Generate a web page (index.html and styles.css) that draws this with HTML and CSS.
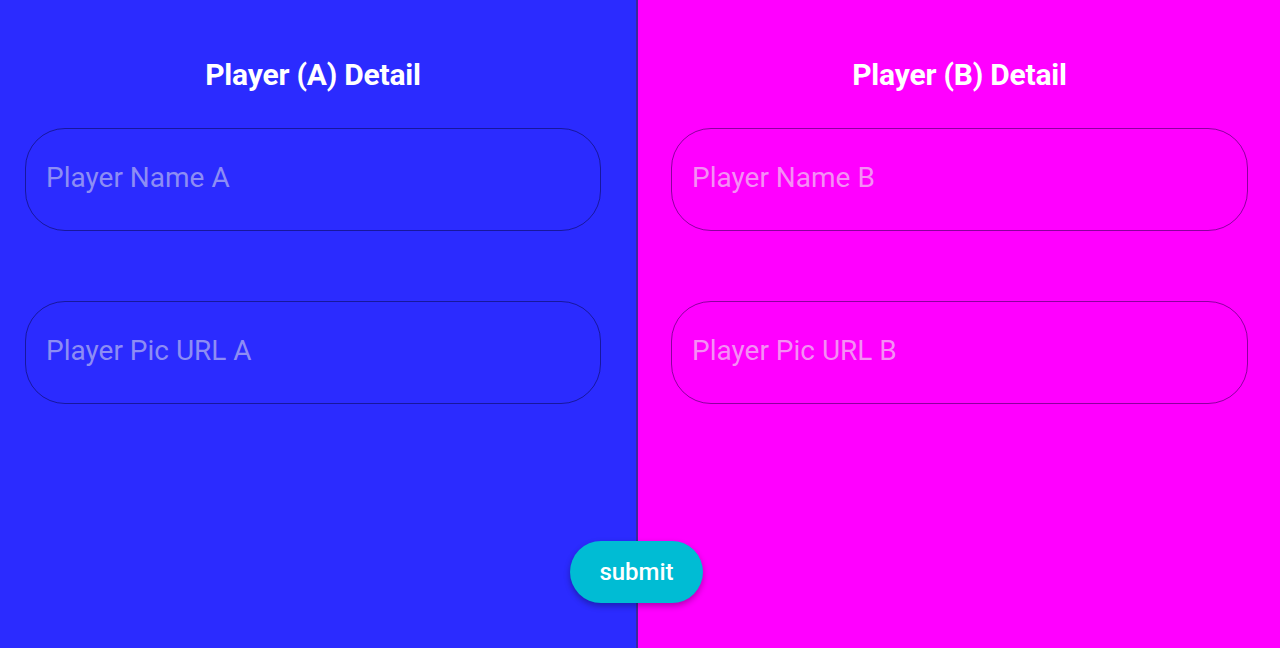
FILE: index.html
```html
<!DOCTYPE html>
<html>
<head>
<meta charset="utf-8">
<link rel="stylesheet" href="styles.css">
</head>
<body>
<div class="page">
  <section class="panel panel-a">
    <h2 class="title">Player (A) Detail</h2>
    <input class="field" type="text" placeholder="Player Name A">
    <input class="field" type="text" placeholder="Player Pic URL A">
  </section>
  <div class="divider"></div>
  <section class="panel panel-b">
    <h2 class="title">Player (B) Detail</h2>
    <input class="field" type="text" placeholder="Player Name B">
    <input class="field" type="text" placeholder="Player Pic URL B">
  </section>
  <button class="submit">submit</button>
</div>
</body>
</html>
```

FILE: styles.css
```css
* { box-sizing: border-box; }
html, body { margin: 0; padding: 0; }
body {
  width: 1280px;
  height: 648px;
  overflow: hidden;
  font-family: Roboto, "Liberation Sans", sans-serif;
}
.page {
  position: relative;
  display: flex;
  height: 648px;
}
.panel {
  display: flex;
  flex-direction: column;
  padding-top: 56px;
}
.panel-a {
  width: 636px;
  background: #2b2bff;
  padding-left: 25px;
  padding-right: 35px;
}
.panel-b {
  flex: 1;
  background: #ff00ff;
  padding-left: 33px;
  padding-right: 32px;
}
.divider {
  width: 2px;
  background: #3a2a9a;
}
.title {
  margin: 0 0 34px 0;
  height: 38px;
  line-height: 38px;
  text-align: center;
  color: #ffffff;
  font-size: 30px;
  font-weight: 700;
  letter-spacing: -0.2px;
}
.field {
  display: block;
  width: 100%;
  height: 103px;
  margin: 0 0 70px 0;
  padding: 0 20px 5px 20px;
  border: 1.5px solid rgba(0, 0, 40, 0.45);
  border-radius: 40px;
  background: transparent;
  font-family: Roboto, "Liberation Sans", sans-serif;
  font-size: 28px;
  color: #ffffff;
  outline: none;
}
.panel-a .field::placeholder { color: #8d8df4; }
.panel-b .field::placeholder { color: #f58ef5; }
.submit {
  position: absolute;
  left: 570px;
  top: 541px;
  width: 133px;
  height: 62px;
  border: none;
  border-radius: 31px;
  background: #00bcd4;
  color: #ffffff;
  font-family: Roboto, "Liberation Sans", sans-serif;
  font-size: 24px;
  font-weight: 500;
  padding: 0;
  box-shadow: 0 3px 6px rgba(0, 0, 0, 0.3);
}
```
